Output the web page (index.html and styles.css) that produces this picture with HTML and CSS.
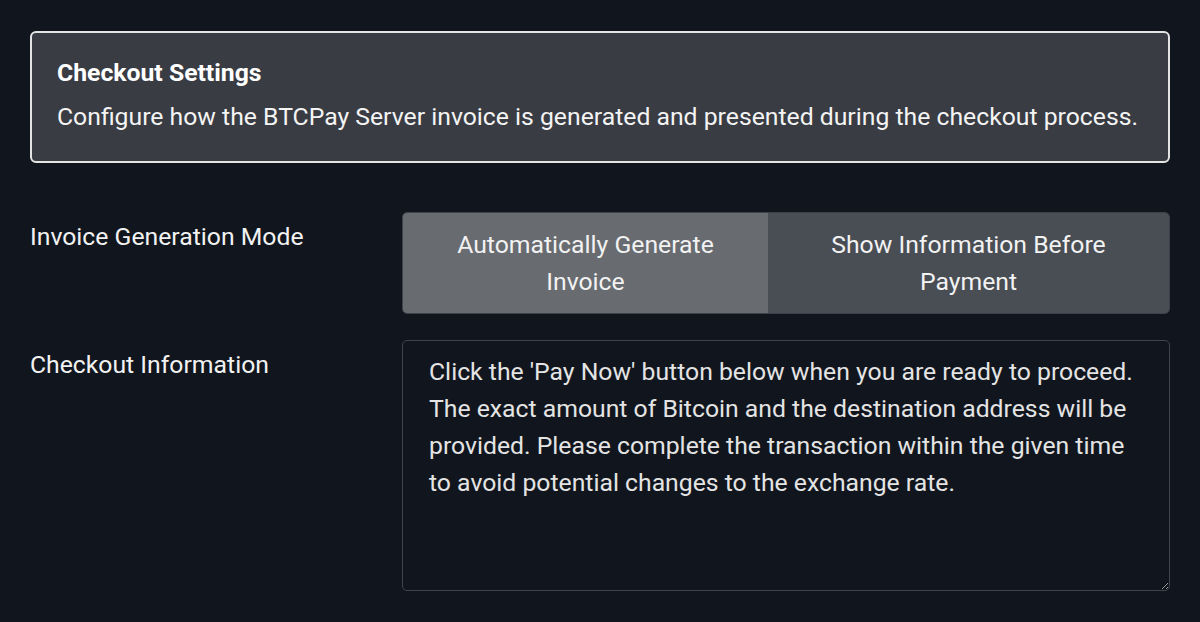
FILE: index.html
```html
<!DOCTYPE html>
<html lang="en">
<head>
<meta charset="utf-8">
<title>Checkout Settings</title>
<link rel="stylesheet" href="styles.css">
</head>
<body>
<div class="page">
  <section class="intro">
    <h2 class="intro-title">Checkout Settings</h2>
    <p class="intro-text">Configure how the BTCPay Server invoice is generated and presented during the checkout process.</p>
  </section>
  <div class="form">
    <div class="row">
      <label class="label">Invoice Generation Mode</label>
      <div class="toggle">
        <button class="toggle-btn active">Automatically Generate<br>Invoice</button>
        <button class="toggle-btn">Show Information Before<br>Payment</button>
      </div>
    </div>
    <div class="row">
      <label class="label" for="info">Checkout Information</label>
      <textarea id="info" class="textarea">Click the 'Pay Now' button below when you are ready to proceed. The exact amount of Bitcoin and the destination address will be provided. Please complete the transaction within the given time to avoid potential changes to the exchange rate.</textarea>
    </div>
  </div>
</div>
</body>
</html>
```

FILE: styles.css
```css
* { box-sizing: border-box; }
html, body {
  margin: 0;
  background: #11161e;
  height: 100%;
}
body {
  font-family: Roboto, "Liberation Sans", sans-serif;
  color: #f2f2f2;
  font-size: 24.75px;
}
.page {
  padding: 31px 30px 0 30px;
}
.intro {
  background: #393c43;
  border: 2px solid #e4e4e4;
  border-radius: 6px;
  padding: 21px 25px 26px 25px;
}
.intro-title {
  margin: 0;
  font-size: 24.75px;
  font-weight: 700;
  line-height: 37px;
  color: #ffffff;
}
.intro-text {
  margin: 7px 0 0 0;
  font-size: 24.75px;
  line-height: 37px;
  color: #f4f4f4;
}
.form {
  margin-top: 49px;
  display: flex;
  flex-direction: column;
  gap: 26px;
}
.row {
  display: flex;
  align-items: flex-start;
}
.label {
  width: 372px;
  flex: none;
  padding-top: 6px;
  line-height: 37px;
  color: #f2f2f2;
}
.toggle {
  flex: 1;
  display: flex;
  border-radius: 5px;
  overflow: hidden;
  border: 1px solid #3d4149;
}
.toggle-btn {
  flex: 1;
  border: 0;
  margin: 0;
  background: #494d54;
  color: #f2f2f2;
  font-family: inherit;
  font-size: 24.75px;
  line-height: 37px;
  padding: 13px 10px;
  text-align: center;
}
.toggle-btn.active {
  background: #686b70;
  flex: 0 0 365px;
}
.textarea {
  flex: 1;
  height: 251px;
  background: #11161e;
  border: 1px solid #3e434c;
  border-radius: 5px;
  color: #e4e4e4;
  font-family: inherit;
  font-size: 24.75px;
  line-height: 37px;
  padding: 12px 26px;
  resize: vertical;
}
```
